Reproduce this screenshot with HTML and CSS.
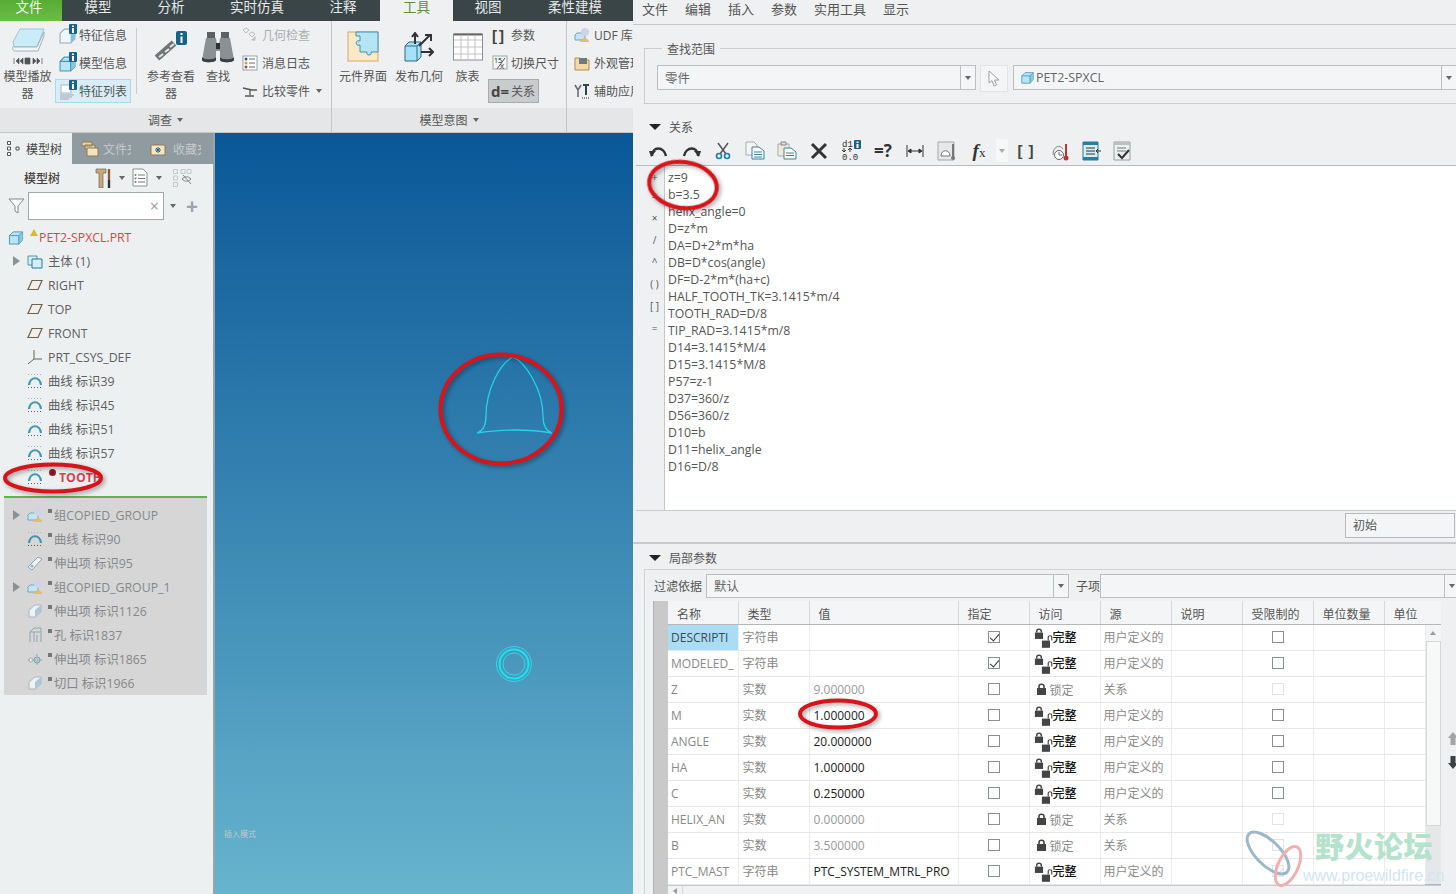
FILE: index.html
```html
<!DOCTYPE html>
<html lang="zh">
<head>
<meta charset="utf-8">
<title>关系</title>
<link rel="stylesheet" href="styles.css">
</head>
<body>
<svg class="defs" xmlns="http://www.w3.org/2000/svg">
  <symbol id="cube" viewBox="0 0 16 16"><path d="M1 6 5 2H15V11L11 15H1Z" fill="#b5e6f8" stroke="#4f93ad"/><path d="M11 6 15 2V11L11 15Z" fill="#7fcbe6"/><path d="M1 6H11V15M11 6 15 2" fill="none" stroke="#4f93ad"/></symbol>
  <symbol id="cubew" viewBox="0 0 16 16"><path d="M1 6 5 2H15V11L11 15H1Z" fill="#eef7fa" stroke="#9ab"/><path d="M11 6V15L15 11V2Z" fill="#7cc4de"/></symbol>
  <symbol id="badge" viewBox="0 0 8 10"><rect width="8" height="10" rx="1" fill="#17648a"/><path d="M3 1.500h2V3H3ZM3 4h2v5H3Z" fill="#fff"/></symbol>
  <symbol id="plane" viewBox="0 0 16 12"><path d="M5 1.500H15L11 10.500H1Z" fill="#f1efe9" stroke="#6d6152" stroke-width="1.200"/></symbol>
  <symbol id="curve" viewBox="0 0 16 16"><path d="M2 12C3 3 13 3 14 12" fill="none" stroke="#3f97ad" stroke-width="2.200"/><path d="M1 14.500H15" stroke="#56676e" stroke-dasharray="1 2"/><path d="M1 1.500H15" stroke="#aab7bc" stroke-dasharray="1 2"/></symbol>
  <symbol id="group" viewBox="0 0 16 16"><path d="M1 8 3 6H11V13H1Z" fill="#c3e6f3" stroke="#6fa7bd"/><circle cx="11" cy="5" r="4" fill="#cfd3e8"/><path d="M6 15C6 10 15 10 15 15Z" fill="#e0bd6f"/></symbol>
  <symbol id="lock" viewBox="0 0 11 12"><path d="M3 5V3.500C3 .5 8 .5 8 3.500V5" fill="none" stroke="#444" stroke-width="1.600"/><rect x="1" y="5" width="9" height="7" fill="#444"/></symbol>
  <symbol id="lockopen" viewBox="0 0 20 16"><rect x="1" y="7" width="9" height="8" fill="#444"/><path d="M8 7V3.500C8 1 12 1 12 3.500V7" fill="none" stroke="#444" stroke-width="1.300"/></symbol>
  <symbol id="solid" viewBox="0 0 16 16"><path d="M2 7 8 2 14 2V9L8 14H2Z" fill="#eef2f3" stroke="#aab6ba"/><path d="M8 7 14 2V9L8 14Z" fill="#a9c9d6"/></symbol>
</svg>

<div class="page">
  <div class="app">
    <nav class="tabs">
      <span class="tab t-file">文件</span>
      <span class="tab t-a">模型</span>
      <span class="tab t-b">分析</span>
      <span class="tab t-c">实时仿真</span>
      <span class="tab t-b">注释</span>
      <span class="tab t-tool">工具</span>
      <span class="tab t-d">视图</span>
      <span class="tab t-e">柔性建模</span>
    </nav>

    <div class="ribbon">
      <section class="group g1">
        <div class="group-body">
          <div class="big w-play">
            <span class="big-icon"><svg width="36" height="38" viewBox="0 0 36 38"><path d="M3 14 10 1H34L27 19H4Z" fill="#c9ecf8" stroke="#9fc5d3"/><path d="M4 19H27L34 4V8L28 23H5C2 23 2 17 4 19Z" fill="#f3f6f7" stroke="#9fb0b8"/><path d="M4 30v6M6 33l3-3v6ZM10 33l3-3v6ZM15 30h5v6h-5ZM23 30l3 3-3 3ZM27 30l3 3-3 3ZM32 30v6" fill="#555" stroke="#555" stroke-width=".7"/></svg></span>
            <span class="big-label">模型播放器</span>
          </div>
          <div class="small-col w-info">
            <div class="small"><span class="si"><svg width="17" height="17"><use href="#cubew"/></svg><svg class="si-b" width="8" height="10"><use href="#badge"/></svg></span><span>特征信息</span></div>
            <div class="small"><span class="si"><svg width="17" height="17"><use href="#cube"/></svg><svg class="si-b" width="8" height="10"><use href="#badge"/></svg></span><span>模型信息</span></div>
            <div class="small on"><span class="si"><svg width="17" height="17" viewBox="0 0 17 17"><rect x="2" y="2" width="10" height="8" fill="#fff" stroke="#a9b5ba"/><path d="M1 12H15M1 14H13M1 16H10" stroke="#a3a9ac"/></svg><svg class="si-b" width="8" height="10"><use href="#badge"/></svg></span><span>特征列表</span></div>
          </div>
          <span class="vsep"></span>
          <div class="big w-ref">
            <span class="big-icon"><svg width="34" height="34" viewBox="0 0 34 34"><path d="M3 28 20 13" stroke="#6e7478" stroke-width="7"/><path d="M5 27l4-3M11 22l4-3M16 17l4-3" stroke="#e8e8e8" stroke-width="2"/><rect x="22" y="1" width="11" height="14" rx="2" fill="#17648a"/><path d="M26.500 3h2v2h-2ZM26.500 6.500h2V13h-2Z" fill="#fff"/></svg></span>
            <span class="big-label">参考查看器</span>
          </div>
          <div class="big w-find">
            <span class="big-icon"><svg width="34" height="32" viewBox="0 0 34 32"><path d="M6 1h8v6H6ZM20 1h8v6h-8Z" fill="#5c6164"/><path d="M5 7h10l1 7h2l1-7h10l4 22c0 3-13 3-14 0v-9h-4v9C15 32 1 32 1 29Z" fill="#8b9193"/><path d="M1 26c1 3 13 3 14 0v3c-1 3-14 3-14 0ZM19 26c1 3 13 3 14 0v3c-1 3-14 3-14 0Z" fill="#3b3f41"/><path d="M15 12h4v6h-4Z" fill="#2e3133"/></svg></span>
            <span class="big-label">查找</span>
          </div>
          <div class="small-col w-tools">
            <div class="small dim"><span class="si"><svg width="16" height="16" viewBox="0 0 16 16"><path d="M1 3 4 1 7 3 4 6ZM7 7l3-2 3 2-3 3Z" fill="none" stroke="#b9bfc2"/><path d="M9 13l5-4-1 5Z" fill="#b9bfc2"/></svg></span><span>几何检查</span></div>
            <div class="small"><span class="si"><svg width="16" height="16" viewBox="0 0 16 16"><rect x="1" y="1" width="14" height="14" fill="#fff" stroke="#9aa3a7"/><path d="M7 4h6M7 8h6M7 12h6" stroke="#666"/><circle cx="4" cy="4" r="1.500" fill="#17648a"/><circle cx="4" cy="8" r="1.500" fill="#d99b2a"/><circle cx="4" cy="12" r="1.500" fill="#b04a3a"/></svg></span><span>消息日志</span></div>
            <div class="small"><span class="si"><svg width="16" height="16" viewBox="0 0 16 16"><path d="M1 5 10 7H15M8 7V12M3 13H12" fill="none" stroke="#555" stroke-width="1.300"/></svg></span><span>比较零件</span><i class="caret c-cmp"></i></div>
          </div>
        </div>
        <div class="group-label">调查<i class="caret"></i></div>
      </section>

      <section class="group g2">
        <div class="group-body">
          <div class="big w-m1">
            <span class="big-icon"><svg width="32" height="32" viewBox="0 0 32 32"><rect x="1" y="1" width="30" height="29" fill="#fbe9c6" stroke="#d7a869"/><path d="M9 1H31V21H24C26 25 18 25 20 21H13V14C8 16 8 8 13 10V5H9Z" fill="#b5e4f5" stroke="#3e92b2"/></svg></span>
            <span class="big-label">元件界面</span>
          </div>
          <div class="big w-m1">
            <span class="big-icon"><svg width="30" height="30" viewBox="0 0 30 30"><path d="M1 14 5 10H17V25L13 29H1Z" fill="#a6e1f7" stroke="#2f6a80"/><path d="M1 14H13V29M13 14 17 10" fill="none" stroke="#2f6a80"/><path d="M11 12V2M8 5l3-4 3 4M15 14 26 3M21 3h6v6M17 20H29M25 16l4 4-4 4" fill="none" stroke="#333" stroke-width="2"/></svg></span>
            <span class="big-label">发布几何</span>
          </div>
          <div class="big w-m2">
            <span class="big-icon"><svg width="30" height="28" viewBox="0 0 30 28"><rect x=".5" y="1" width="29" height="26" fill="#fff" stroke="#8d8d8d"/><path d="M1 1.500H29" stroke="#666" stroke-width="2"/><path d="M1 7H29M1 14H29M1 21H29M8 2V27M15 2V27M22 2V27" stroke="#c3c3c3"/></svg></span>
            <span class="big-label">族表</span>
          </div>
          <div class="small-col w-m3">
            <div class="small"><span class="si-w bracket">[ ]</span><span>参数</span></div>
            <div class="small"><span class="si-w"><svg width="16" height="16" viewBox="0 0 16 16"><rect x="1" y="1" width="14" height="13" fill="#f4f4f4" stroke="#9aa"/><text class="svg-t" x="2" y="8">15</text><path d="M5 14 13 3" stroke="#555"/><text class="svg-t" x="8" y="14">X</text></svg></span><span>切换尺寸</span></div>
            <div class="small act"><span class="si-w dq">d=</span><span>关系</span></div>
          </div>
        </div>
        <div class="group-label">模型意图<i class="caret"></i></div>
      </section>

      <section class="group g3">
        <div class="group-body">
          <div class="small-col w-m4">
            <div class="small"><span class="si"><svg width="16" height="16"><use href="#group"/></svg></span><span>UDF 库</span></div>
            <div class="small"><span class="si"><svg width="16" height="16" viewBox="0 0 16 16"><path d="M1 3H6L8 5H15V15H1Z" fill="#f1d9a8" stroke="#b08b52"/><rect x="5" y="3" width="8" height="6" fill="#6f7a7f"/></svg></span><span>外观管理</span></div>
            <div class="small"><span class="si"><svg width="16" height="16" viewBox="0 0 16 16"><path d="M1 2 4 7V14M7 2 4 7" fill="none" stroke="#667" stroke-width="1.500"/><path d="M9 2H15M12 2V12" stroke="#345" stroke-width="2"/><path d="M8 15H15" stroke="#333" stroke-dasharray="1 1"/></svg></span><span>辅助应用</span></div>
          </div>
        </div>
        <div class="group-label"></div>
      </section>
    </div>

    <div class="work">
      <aside class="side">
        <div class="side-tabs">
          <span class="stab on"><svg width="15" height="17" viewBox="0 0 15 17"><path d="M1.500 1.500h3v3h-3ZM1.500 7h3v3h-3ZM1.500 12.500h3v3h-3ZM10 7h3v3h-3Z" fill="#fff" stroke="#555"/></svg>模型树</span>
          <span class="stab"><svg width="18" height="16" viewBox="0 0 18 16"><path d="M1 1H11V5H1ZM4 4H14V8H4Z" fill="#e9d3a6" stroke="#8d7a55"/><path d="M6 7H17V15H6Z" fill="#f3e4bf" stroke="#8d7a55"/></svg><span class="clip-a">文件夹</span></span>
          <span class="stab s3"><svg width="16" height="14" viewBox="0 0 16 14"><path d="M1 3H15V13H1Z" fill="#f5e6c2" stroke="#8d7a55"/><path d="M8 5v6M5 8h6M6 6l4 4M10 6l-4 4" stroke="#17648a"/></svg><span class="clip-a">收藏夹</span></span>
        </div>
        <div class="side-tool">
          <span class="st-title">模型树</span>
          <svg class="st-a" width="17" height="20" viewBox="0 0 17 20"><path d="M1 1h10v4H8v15H4V5H1Z" fill="#c9a875" stroke="#555" stroke-width=".6"/><path d="M14 1V12" stroke="#8a5b2f" stroke-width="2.400"/><path d="M14 12v8" stroke="#333" stroke-width="2.400"/></svg>
          <i class="caret c-a"></i>
          <svg class="st-b" width="16" height="19" viewBox="0 0 16 19"><path d="M1 1H11L15 5V18H1Z" fill="#fff" stroke="#8a8f92"/><path d="M6 7H13M6 10.500H13M6 14H13" stroke="#777"/><circle cx="3.500" cy="7" r="1" fill="#777"/><circle cx="3.500" cy="10.500" r="1" fill="#777"/><circle cx="3.500" cy="14" r="1" fill="#777"/></svg>
          <i class="caret c-b"></i>
          <svg class="st-c" width="21" height="20" viewBox="0 0 21 20"><path d="M1.500 1.500h4v4h-4ZM1.500 8h4v4h-4ZM1.500 14.500h4v4h-4ZM9 1.500h4v4H9ZM15 1.500h4v4h-4Z" fill="none" stroke="#c2c7ca"/><path d="M10 11c3-3 6-3 9 0-3 3-6 3-9 0ZM11 7l8 9" fill="none" stroke="#7d8386"/></svg>
        </div>
        <div class="side-search">
          <svg width="17" height="16" viewBox="0 0 17 16"><path d="M1 1H16L10 8V15L7 13V8Z" fill="#fff" stroke="#80878a"/></svg>
          <span class="s-input"><span class="s-x">×</span></span>
          <i class="caret c-s"></i>
          <span class="s-plus">+</span>
        </div>

        <ul class="tree">
          <li class="row root"><svg width="15" height="15"><use href="#cube"/></svg><svg class="warn" width="8" height="8" viewBox="0 0 8 8"><path d="M4 0 8 7H0Z" fill="#e4b429"/></svg><span>PET2-SPXCL.PRT</span></li>
          <li class="row exp"><svg width="16" height="16" viewBox="0 0 16 16"><path d="M1 3H10V12H1Z" fill="#d2eefa" stroke="#4a97b6"/><path d="M5 6H15V15H5Z" fill="#d2eefa" stroke="#2f7696"/></svg><span>主体 (1)</span></li>
          <li class="row"><svg width="16" height="12"><use href="#plane"/></svg><span>RIGHT</span></li>
          <li class="row"><svg width="16" height="12"><use href="#plane"/></svg><span>TOP</span></li>
          <li class="row"><svg width="16" height="12"><use href="#plane"/></svg><span>FRONT</span></li>
          <li class="row"><svg width="16" height="16" viewBox="0 0 16 16"><path d="M7 1V10L1 15M7 10H15" fill="none" stroke="#6d6152"/></svg><span>PRT_CSYS_DEF</span></li>
          <li class="row"><svg width="16" height="16"><use href="#curve"/></svg><span>曲线 标识39</span></li>
          <li class="row"><svg width="16" height="16"><use href="#curve"/></svg><span>曲线 标识45</span></li>
          <li class="row"><svg width="16" height="16"><use href="#curve"/></svg><span>曲线 标识51</span></li>
          <li class="row"><svg width="16" height="16"><use href="#curve"/></svg><span>曲线 标识57</span></li>
          <li class="row fail"><svg width="16" height="16"><use href="#curve"/></svg><i class="err"></i><span>TOOTH</span></li>
        </ul>
        <div class="insert-line"></div>
        <ul class="tree off">
          <li class="row exp"><svg width="16" height="16"><use href="#group"/></svg><i class="mk"></i><span>组COPIED_GROUP</span></li>
          <li class="row"><svg width="16" height="16"><use href="#curve"/></svg><i class="mk"></i><span>曲线 标识90</span></li>
          <li class="row"><svg width="16" height="16" viewBox="0 0 16 16"><path d="M1 12 11 2 15 4 5 15Z" fill="#eef2f3" stroke="#8fa7b2"/><circle cx="5" cy="11" r="1.500" fill="#8fb7c8"/></svg><i class="mk"></i><span>伸出项 标识95</span></li>
          <li class="row exp"><svg width="16" height="16"><use href="#group"/></svg><i class="mk"></i><span>组COPIED_GROUP_1</span></li>
          <li class="row"><svg width="16" height="16"><use href="#solid"/></svg><i class="mk"></i><span>伸出项 标识1126</span></li>
          <li class="row"><svg width="16" height="16" viewBox="0 0 16 16"><path d="M3 15V5L7 1H14V15M7 15V5L3 5M7 5H14M10 15V8" fill="none" stroke="#8fa7b2"/></svg><i class="mk"></i><span>孔 标识1837</span></li>
          <li class="row"><svg width="16" height="16" viewBox="0 0 16 16"><circle cx="10" cy="9" r="3" fill="none" stroke="#6e9fb4"/><circle cx="4" cy="9" r="2" fill="#fff" stroke="#aab"/><path d="M10 3V15M1 9H15" stroke="#8fa7b2" stroke-dasharray="2 1"/></svg><i class="mk"></i><span>伸出项 标识1865</span></li>
          <li class="row"><svg width="16" height="16"><use href="#solid"/></svg><i class="mk"></i><span>切口 标识1966</span></li>
        </ul>
      </aside>
      <main class="view"><span class="mode">插入模式</span></main>
    </div>
  </div>

  <div class="dialog">
    <nav class="menu">
      <span>文件</span><span>编辑</span><span>插入</span><span>参数</span><span>实用工具</span><span>显示</span>
    </nav>

    <fieldset class="scope">
      <legend>查找范围</legend>
      <div class="scope-row">
        <div class="sel s-part"><span class="sel-t">零件</span><span class="sel-c"><i class="caret"></i></span></div>
        <span class="pick"><svg width="12" height="17" viewBox="0 0 12 17"><path d="M1 1V13L4 10.500 6 16 8.500 15 6.500 10H11Z" fill="#fff" stroke="#9a9fa2"/></svg></span>
        <div class="sel s-obj"><span class="sel-t"><svg width="13" height="13"><use href="#cube"/></svg>PET2-SPXCL</span><span class="sel-c"><i class="caret"></i></span></div>
      </div>
    </fieldset>

    <div class="sec-head rel-head"><i class="tri"></i>关系</div>
    <div class="rtools">
      <svg class="rt" width="20" height="16" viewBox="0 0 20 16"><path d="M3 13C3 3 15 3 17 13" fill="none" stroke="#333" stroke-width="2.400"/><path d="M0 8 7 8 2 14Z" fill="#333"/></svg>
      <svg class="rt" width="20" height="16" viewBox="0 0 20 16"><path d="M3 13C5 3 17 3 17 13" fill="none" stroke="#333" stroke-width="2.400"/><path d="M20 8 13 8 18 14Z" fill="#333"/></svg>
      <svg class="rt" width="16" height="18" viewBox="0 0 16 18"><path d="M3 1 11 12M13 1 5 12" stroke="#555" stroke-width="1.500"/><circle cx="4" cy="14" r="2.500" fill="none" stroke="#1e7ea1" stroke-width="1.600"/><circle cx="12" cy="14" r="2.500" fill="none" stroke="#1e7ea1" stroke-width="1.600"/></svg>
      <svg class="rt" width="20" height="19" viewBox="0 0 20 19"><path d="M1 1H9L12 4V14H1Z" fill="#f5f5f5" stroke="#a8adb0"/><path d="M7 6H14L19 10V18H7Z" fill="#fff" stroke="#3e7f99"/><path d="M9 11H17M9 13.500H17M9 16H17" stroke="#3e7f99"/></svg>
      <svg class="rt" width="20" height="19" viewBox="0 0 20 19"><path d="M1 3H12V15H1Z" fill="#f1e9da" stroke="#a8adb0"/><path d="M4 1H9V4H4Z" fill="#ddd" stroke="#888"/><path d="M7 7H14L19 11V18H7Z" fill="#fff" stroke="#3e7f99"/><path d="M9 12H17M9 14.500H17" stroke="#3e7f99"/></svg>
      <svg class="rt" width="18" height="18" viewBox="0 0 18 18"><path d="M2 2 16 16M16 2 2 16" stroke="#333" stroke-width="3"/></svg>
      <svg class="rt" width="20" height="21" viewBox="0 0 20 21"><text class="svg-m" x="1" y="7">d1</text><rect x="13" y="0" width="7" height="9" rx="1" fill="#17648a"/><path d="M15.500 1.500h2V3h-2ZM15.500 4h2v4h-2Z" fill="#fff"/><path d="M3 8v4M1 10l2 2 2-2M9 12V8M7 10l2-2 2 2" fill="none" stroke="#333"/><text class="svg-m" x="1" y="20">0.0</text></svg>
      <span class="eq">=?</span>
      <svg class="rt" width="18" height="14" viewBox="0 0 18 14"><path d="M1 1V13M17 1V13M2 7H16M2 7l3-2v4ZM16 7l-3-2v4Z" stroke="#333" fill="#333"/></svg>
      <svg class="rt" width="20" height="20" viewBox="0 0 20 20"><path d="M1 19V1H17V19Z" fill="#e6e8e9" stroke="#a3a8ab"/><path d="M4 15C4 8 13 8 13 15Z" fill="#fff" stroke="#777"/><path d="M16 3V16" stroke="#777" stroke-width="2"/><circle cx="16" cy="17" r="2" fill="#777"/></svg>
      <span class="fx"><span class="fx-f">f</span>x</span>
      <span class="fx-c"><i class="caret"></i></span>
      <span class="brk">[ ]</span>
      <svg class="rt" width="20" height="20" viewBox="0 0 20 20"><path d="M3 14C3 5 10 3 13 8" fill="#eee" stroke="#888"/><circle cx="9" cy="14" r="4.500" fill="#fff" stroke="#666"/><path d="M9 11V14H12" fill="none" stroke="#666"/><path d="M16 3V15" stroke="#b33" stroke-width="2"/><circle cx="16" cy="17" r="2.500" fill="#b33"/></svg>
      <svg class="rt" width="20" height="20" viewBox="0 0 20 20"><path d="M1 1H16V19H1Z" fill="#d7ecf4" stroke="#2b7c9d"/><path d="M1 1H16V4H1ZM1 16H16V19H1Z" fill="#2b7c9d"/><path d="M4 7H13M4 10H13M4 13H13" stroke="#333"/><path d="M19 10 14 10M16 8l-2 2 2 2" fill="none" stroke="#333"/></svg>
      <svg class="rt" width="18" height="20" viewBox="0 0 18 20"><path d="M1 1H17V19H1Z" fill="#eceeef" stroke="#98a0a4"/><path d="M1 1H17V4H1Z" fill="#b9c0c3"/><path d="M4 7H13M4 10H13" stroke="#777"/><path d="M5 13 9 17 16 9" fill="none" stroke="#333" stroke-width="2"/></svg>
    </div>

    <div class="editor">
      <div class="gutter">
        <span class="t">+</span><span class="t">−</span><span>×</span><span>/</span><span>^</span><span>( )</span><span>[ ]</span><span>=</span>
      </div>
      <pre class="code">z=9
b=3.5
helix_angle=0
D=z*m
DA=D+2*m*ha
DB=D*cos(angle)
DF=D-2*m*(ha+c)
HALF_TOOTH_TK=3.1415*m/4
TOOTH_RAD=D/8
TIP_RAD=3.1415*m/8
D14=3.1415*M/4
D15=3.1415*M/8
P57=z-1
D37=360/z
D56=360/z
D10=b
D11=helix_angle
D16=D/8</pre>
    </div>
    <div class="init-row"><span class="init">初始</span></div>
    <div class="thick"></div>

    <div class="sec-head par-head"><i class="tri"></i>局部参数</div>
    <div class="panel">
      <div class="filter">
        <span class="f-label">过滤依据</span>
        <div class="sel s-filter"><span class="sel-t">默认</span><span class="sel-c"><i class="caret"></i></span></div>
        <span class="f-sub">子项</span>
        <div class="sel s-child"><span class="sel-t"></span><span class="sel-c"><i class="caret"></i></span></div>
      </div>
      <div class="tbl-wrap">
        <div class="rowhead"></div>
        <div class="tbl-col">
          <table class="params">
            <colgroup><col class="c1"><col class="c2"><col class="c3"><col class="c2"><col class="c2"><col class="c2"><col class="c2"><col class="c2"><col class="c2"><col class="c4"><col class="c5"></colgroup>
            <thead><tr><th>名称</th><th>类型</th><th>值</th><th>指定</th><th>访问</th><th>源</th><th>说明</th><th>受限制的</th><th>单位数量</th><th colspan="2">单位</th></tr></thead>
            <tbody>
              <tr><td class="nm sel-nm"><span>DESCRIPTI</span></td><td class="ty">字符串</td><td></td><td class="ck"><i class="box yes"></i></td><td class="ac"><span class="locks"><svg class="l1" width="10" height="11"><use href="#lock"/></svg><svg class="l2" width="18" height="15" viewBox="0 0 20 16"><use href="#lockopen"/></svg></span><span class="full">完整</span></td><td class="src">用户定义的</td><td></td><td class="ck"><i class="box"></i></td><td></td><td></td>
                <td class="sb" rowspan="10"><div class="sb-in"><span class="sb-up"><i class="caret up"></i></span><span class="sb-thumb"></span><span class="sb-rest"></span></div></td></tr>
              <tr><td class="nm"><span>MODELED_</span></td><td class="ty">字符串</td><td></td><td class="ck"><i class="box yes"></i></td><td class="ac"><span class="locks"><svg class="l1" width="10" height="11"><use href="#lock"/></svg><svg class="l2" width="18" height="15" viewBox="0 0 20 16"><use href="#lockopen"/></svg></span><span class="full">完整</span></td><td class="src">用户定义的</td><td></td><td class="ck"><i class="box"></i></td><td></td><td></td></tr>
              <tr><td class="nm"><span>Z</span></td><td class="ty">实数</td><td class="v g">9.000000</td><td class="ck"><i class="box"></i></td><td class="ac"><svg class="l0" width="11" height="12"><use href="#lock"/></svg><span class="lk">锁定</span></td><td class="src">关系</td><td></td><td class="ck"><i class="box dis"></i></td><td></td><td></td></tr>
              <tr><td class="nm"><span>M</span></td><td class="ty">实数</td><td class="v">1.000000</td><td class="ck"><i class="box"></i></td><td class="ac"><span class="locks"><svg class="l1" width="10" height="11"><use href="#lock"/></svg><svg class="l2" width="18" height="15" viewBox="0 0 20 16"><use href="#lockopen"/></svg></span><span class="full">完整</span></td><td class="src">用户定义的</td><td></td><td class="ck"><i class="box"></i></td><td></td><td></td></tr>
              <tr><td class="nm"><span>ANGLE</span></td><td class="ty">实数</td><td class="v">20.000000</td><td class="ck"><i class="box"></i></td><td class="ac"><span class="locks"><svg class="l1" width="10" height="11"><use href="#lock"/></svg><svg class="l2" width="18" height="15" viewBox="0 0 20 16"><use href="#lockopen"/></svg></span><span class="full">完整</span></td><td class="src">用户定义的</td><td></td><td class="ck"><i class="box"></i></td><td></td><td></td></tr>
              <tr><td class="nm"><span>HA</span></td><td class="ty">实数</td><td class="v">1.000000</td><td class="ck"><i class="box"></i></td><td class="ac"><span class="locks"><svg class="l1" width="10" height="11"><use href="#lock"/></svg><svg class="l2" width="18" height="15" viewBox="0 0 20 16"><use href="#lockopen"/></svg></span><span class="full">完整</span></td><td class="src">用户定义的</td><td></td><td class="ck"><i class="box"></i></td><td></td><td></td></tr>
              <tr><td class="nm"><span>C</span></td><td class="ty">实数</td><td class="v">0.250000</td><td class="ck"><i class="box"></i></td><td class="ac"><span class="locks"><svg class="l1" width="10" height="11"><use href="#lock"/></svg><svg class="l2" width="18" height="15" viewBox="0 0 20 16"><use href="#lockopen"/></svg></span><span class="full">完整</span></td><td class="src">用户定义的</td><td></td><td class="ck"><i class="box"></i></td><td></td><td></td></tr>
              <tr><td class="nm"><span>HELIX_AN</span></td><td class="ty">实数</td><td class="v g">0.000000</td><td class="ck"><i class="box"></i></td><td class="ac"><svg class="l0" width="11" height="12"><use href="#lock"/></svg><span class="lk">锁定</span></td><td class="src">关系</td><td></td><td class="ck"><i class="box dis"></i></td><td></td><td></td></tr>
              <tr><td class="nm"><span>B</span></td><td class="ty">实数</td><td class="v g">3.500000</td><td class="ck"><i class="box"></i></td><td class="ac"><svg class="l0" width="11" height="12"><use href="#lock"/></svg><span class="lk">锁定</span></td><td class="src">关系</td><td></td><td class="ck"><i class="box dis"></i></td><td></td><td></td></tr>
              <tr><td class="nm"><span>PTC_MAST</span></td><td class="ty">字符串</td><td class="v"><span class="clip-v">PTC_SYSTEM_MTRL_PRO</span></td><td class="ck"><i class="box"></i></td><td class="ac"><span class="locks"><svg class="l1" width="10" height="11"><use href="#lock"/></svg><svg class="l2" width="18" height="15" viewBox="0 0 20 16"><use href="#lockopen"/></svg></span><span class="full">完整</span></td><td class="src">用户定义的</td><td></td><td class="ck"><i class="box yes dis"></i></td><td></td><td></td></tr>
            </tbody>
          </table>
          <div class="hscroll"><span class="hs-l"><i class="caret left"></i></span></div>
        </div>
        <div class="updown">
          <svg width="10" height="13" viewBox="0 0 10 13"><path d="M5 0 10 6H7.500V13H2.500V6H0Z" fill="#a0a4a6"/></svg>
          <svg width="10" height="13" viewBox="0 0 10 13"><path d="M5 13 10 7H7.500V0H2.500V7H0Z" fill="#3d4144"/></svg>
        </div>
      </div>
    </div>
  </div>

  <svg class="marks" width="1456" height="894" viewBox="0 0 1456 894">
    <path d="M477 433C483 431 486 425 486 416C486 390 500 363 513 357C526 363 543 390 543 416C543 425 546 431 552 433M477 433C500 429 530 429 552 433" fill="none" stroke="#25d3e6" stroke-width="1.300"/>
    <circle cx="514" cy="664" r="17.500" fill="none" stroke="#2de6ee" stroke-width=".8"/>
    <circle cx="514" cy="664" r="14.500" fill="none" stroke="#19e3ee" stroke-width="2"/>
    <circle cx="514" cy="664" r="11" fill="none" stroke="#2de6ee" stroke-width=".8"/>
    <g class="ring">
      <ellipse cx="683" cy="185" rx="34" ry="23" transform="rotate(8 683 185)"/>
      <ellipse cx="501" cy="409" rx="60.500" ry="54.500"/>
      <ellipse cx="53" cy="478" rx="48" ry="13.500"/>
      <ellipse cx="838" cy="714" rx="38" ry="13.500"/>
    </g>
    <g class="wm-logo" fill="none">
      <ellipse cx="1268" cy="853" rx="27" ry="12" transform="rotate(45 1268 853)" stroke="#9bb8c8" stroke-width="3"/>
      <ellipse cx="1288" cy="866" rx="21" ry="10" transform="rotate(-65 1288 866)" stroke="#f0b0b0" stroke-width="3"/>
    </g>
  </svg>
  <div class="wm"><span class="wm-cn">野火论坛</span><span class="wm-en">www.proewildfire.cn</span></div>
</div>
</body>
</html>
```

FILE: styles.css
```css
* { box-sizing: border-box; }
html, body { margin: 0; padding: 0; }
body {
  width: 1456px;
  height: 894px;
  overflow: hidden;
  font-family: "Open Sans", "Noto Sans CJK SC", sans-serif;
  font-size: 12px;
  color: #555;
  background: #eef0f2;
}
.defs { display: none; }
ul { list-style: none; margin: 0; padding: 0; }
i { display: inline-block; font-style: normal; }

.page { position: relative; display: flex; width: 1456px; height: 894px; overflow: hidden; }
.app { width: 633px; height: 894px; display: flex; flex-direction: column; flex: none; }

.caret {
  width: 0; height: 0;
  margin-left: 5px;
  border-left: 3.5px solid transparent;
  border-right: 3.5px solid transparent;
  border-top: 4px solid #666;
}
.caret.up { border-top: 0; border-bottom: 4px solid #999; margin: 0; }
.caret.left { border-left: 0; border-top: 3.5px solid transparent; border-bottom: 3.5px solid transparent; border-right: 4px solid #999; margin: 0; }

/* top tabs */
.tabs { display: flex; height: 21px; flex: none; background: #3a4547; overflow: hidden; }
.tab { display: block; text-align: center; font-size: 13.5px; line-height: 15px; color: #e6eaeb; }
.t-file { width: 62px; padding-right: 4px; background: linear-gradient(#56ad33, #6cbc47); color: #f2f7ec; }
.t-a { width: 72px; }
.t-b { width: 74px; }
.t-c { width: 98px; }
.t-tool { width: 73px; background: #eef0f1; color: #5d9140; }
.t-d { width: 70px; }
.t-e { width: 104px; }

/* ribbon */
.ribbon { display: flex; height: 112px; flex: none; background: #eef0f1; border-bottom: 1px solid #c5c9cb; }
.group { display: flex; flex-direction: column; border-right: 1px solid #c3c7c9; }
.g1 { width: 332px; }
.g2 { width: 235px; }
.g3 { flex: 1; border-right: 0; overflow: hidden; }
.group-body { display: flex; height: 87px; flex: none; }
.group-label { height: 24px; display: flex; align-items: center; justify-content: center; background: #e4e6e7; color: #555; }
.g2 .group-body { padding-left: 3px; }
.big { display: flex; flex-direction: column; align-items: center; flex: none; }
.big-icon { height: 47px; display: flex; align-items: center; justify-content: center; padding-top: 4px; }
.big-label { max-width: 50px; line-height: 17px; text-align: center; color: #555; }
.w-play { width: 55px; }
.w-ref { width: 60px; }
.w-find { width: 34px; }
.w-m1 { width: 56px; }
.w-m2 { width: 41px; }
.small-col { display: flex; flex-direction: column; flex: none; }
.w-info { width: 76px; }
.w-tools { width: 96px; padding-left: 7px; }
.w-m3 { width: 78px; }
.w-m4 { padding-left: 7px; white-space: nowrap; }
.vsep { width: 1px; height: 66px; margin: 7px 4px 0 5px; background: #c8cccd; flex: none; }
.small { display: flex; align-items: center; height: 28px; white-space: nowrap; color: #555; }
.small .si { position: relative; width: 16px; height: 17px; margin-right: 4px; flex: none; }
.w-info .small .si { margin-left: 4px; }
.si-b { position: absolute; right: -2px; top: -3px; }
.small.dim { color: #a9aeb1; }
.c-cmp { margin-left: 6px; }
.small.on, .small.act { height: 24px; margin: 2px 0; }
.small.on { background: #d7eef8; border: 1px solid #a9daec; width: 76px; }
.small.on .si { margin-left: 3px; }
.si-w { width: 22px; margin-left: 1px; flex: none; display: flex; align-items: center; justify-content: center; }
.bracket { font-family: "Liberation Sans", sans-serif; font-size: 15px; font-weight: 700; color: #444; padding-right: 5px; white-space: nowrap; letter-spacing: -1px; }
.dq { font-size: 15px; font-weight: 700; color: #444; line-height: 1; }
.small.act { width: 51px; background: #c9cccd; border: 1px solid #a7abad; }
.small.act .si-w { margin-left: 0; }
.svg-t { font-size: 7px; fill: #222; }
.svg-m { font-size: 9px; fill: #333; font-family: "Liberation Mono", monospace; }

/* side + view */
.work { display: flex; flex: 1; min-height: 0; }
.side { width: 215px; flex: none; background: #edf0f1; border-right: 2px solid #9aa3a7; overflow: hidden; }
.side-tabs { display: flex; height: 31px; background: #909b9f; }
.stab { display: flex; align-items: center; gap: 4px; width: 70px; padding-left: 9px; color: #cbd1d3; white-space: nowrap; overflow: hidden; }
.stab.on { width: 72px; padding-left: 6px; gap: 5px; background: #edf0f1; color: #444; }
.stab.s3 { padding-left: 8px; gap: 7px; }
.clip-a { width: 28px; overflow: hidden; opacity: .9; }
.side-tool { display: flex; align-items: center; height: 27px; padding-left: 24px; }
.st-title { width: 71px; color: #444; font-weight: 500; }
.c-a { margin-left: 7px; }
.st-b { margin-left: 7px; }
.c-b { margin-left: 8px; }
.st-c { margin-left: 10px; }
.side-search { display: flex; align-items: center; height: 30px; padding-left: 8px; }
.s-input { width: 136px; height: 28px; margin-left: 3px; display: flex; align-items: center; justify-content: flex-end; padding-right: 4px; background: #fff; border: 1px solid #a3a8ab; }
.s-x { font-size: 16px; color: #9aa0a3; }
.c-s { margin-left: 6px; }
.s-plus { margin-left: 10px; font-size: 21px; font-weight: 700; line-height: 20px; color: #9ea4a7; }
.tree { padding-top: 4px; }
.row { position: relative; display: flex; align-items: center; height: 24px; padding-left: 27px; font-size: 12.3px; white-space: nowrap; color: #5d6062; }
.row > svg:first-child { width: 16px; margin-right: 5px; flex: none; }
.row.exp::before { content: ""; position: absolute; left: 13px; top: 7px; border-left: 7px solid #8b9194; border-top: 5px solid transparent; border-bottom: 5px solid transparent; }
.row.root { padding-left: 8px; color: #d8464b; }
.row.root > svg:first-child { margin-right: 6px; }
.warn { margin: -8px 1px 0 0; flex: none; }
.fail { color: #d84155; font-weight: 700; }
.err { width: 7px; height: 7px; border-radius: 50%; border: 2px solid #a6161f; background: #333; margin: -9px 3px 0 1px; flex: none; }
.insert-line { height: 2px; margin: 7px 6px 0 4px; background: #5cb745; }
.tree.off { margin: 0 6px 0 4px; padding-top: 5px; height: 197px; background: #d6d6d6; }
.tree.off .row { padding-left: 23px; color: #85888a; }
.tree.off .row.exp::before { left: 9px; }
.mk { width: 4px; height: 4px; margin: -8px 2px 0 0; background: #777; flex: none; }
.view { position: relative; flex: 1; background: linear-gradient(#0a5798, #67b4ce); }
.mode { position: absolute; left: 9px; top: 695px; font-size: 8px; color: #c5c8c8; }

/* dialog */
.dialog { width: 823px; height: 894px; flex: none; overflow: hidden; background: #eef0f2; }
.menu { display: flex; gap: 17px; height: 25px; padding: 1px 0 0 9px; border-bottom: 1px solid #c4c7c9; font-size: 13px; line-height: 16px; color: #555; }
.scope { display: block; width: 900px; height: 64px; margin: 15px 0 0 11px; padding: 0 0 0 12px; border: 1px solid #c9cccd; min-inline-size: 0; }
.scope legend { margin-left: 5px; padding: 0 5px; height: 17px; line-height: 20px; color: #555; }
.scope-row { display: flex; margin-top: 8px; }
.sel { display: flex; height: 25px; background: #f4f5f6; border: 1px solid #bcbfc1; flex: none; }
.sel-t { flex: 1; display: flex; align-items: center; gap: 2px; padding-left: 7px; color: #666; font-size: 12.4px; }
.sel-c { width: 15px; display: flex; align-items: center; justify-content: center; border-left: 1px solid #bcbfc1; }
.sel-c .caret { margin: 0; }
.s-part { width: 319px; }
.pick { width: 28px; height: 27px; margin: 0 5px 0 4px; display: flex; align-items: center; justify-content: center; background: #f4f5f6; border: 1px solid #e2e4e5; }
.s-obj { width: 444px; }
.sec-head { display: flex; align-items: center; height: 16px; padding-left: 16px; color: #555; }
.tri { width: 0; height: 0; margin-right: 8px; border-left: 6px solid transparent; border-right: 6px solid transparent; border-top: 6px solid #222; }
.rel-head { margin-top: 15px; }
.rtools { display: flex; align-items: center; height: 23px; margin: 4px 0 3px 10px; }
.rt { flex: none; margin: 0 6px; }
.rt:nth-child(3) { margin: 0 8px; }
.rt:nth-child(6) { margin: 0 7px; }
.rt:nth-child(9) { margin: 0 7px; }
.eq { flex: none; width: 20px; margin: 0 6px; text-align: center; font-size: 17px; font-weight: 700; color: #333; }
.fx { flex: none; width: 20px; margin: 0 6px; font-size: 13px; text-align: center; color: #333; font-family: "Liberation Serif", serif; }
.fx-f { font-size: 19px; font-style: italic; font-weight: 700; }
.fx-c { width: 12px; height: 23px; margin-left: 1px; display: flex; align-items: center; justify-content: center; background: #f6f7f7; }
.fx-c .caret { margin: 0; border-top-color: #aaa; }
.brk { flex: none; width: 18px; margin: 0 9px 0 9px; text-align: center; font-size: 15px; font-weight: 700; color: #444; white-space: nowrap; letter-spacing: 1px; font-family: "Liberation Sans", sans-serif; }
.rt:nth-child(16) { margin: 0 6px 0 5px; }
.editor { display: flex; height: 346px; margin-left: 3px; background: #fff; border-top: 1px solid #b8bcbe; border-bottom: 1px solid #c8cbcd; }
.gutter { display: flex; flex-direction: column; width: 29px; flex: none; padding: 1px 0 0 9px; background: #eef0f2; border-right: 1px solid #c4c7c9; font-size: 10px; color: #555; }
.gutter span { height: 22px; line-height: 22px; text-align: center; white-space: nowrap; }
.gutter span.t { height: 20px; line-height: 20px; }
.code { flex: 1; margin: 0; padding: 3px 0 0 3px; font: 12.3px/17px "Open Sans", sans-serif; color: #555; }
.init-row { display: flex; justify-content: flex-end; height: 25px; margin-top: 2px; padding-right: 1px; }
.init { width: 110px; height: 25px; padding-left: 7px; line-height: 23px; background: #f4f5f6; border: 1px solid #b8bbbd; color: #555; }
.thick { height: 2px; margin-top: 4px; background: #c7cacc; }
.par-head { margin-top: 6px; }
.panel { margin: 3px 0 0 11px; height: 330px; border: 1px solid #cfd2d3; border-right: 0; border-bottom: 0; overflow: hidden; }
.filter { display: flex; align-items: center; height: 24px; margin-top: 4px; padding-left: 9px; }
.f-label { width: 52px; flex: none; color: #555; }
.s-filter { width: 363px; height: 24px; }
.f-sub { width: 31px; flex: none; padding-left: 7px; white-space: nowrap; color: #555; }
.s-child { width: 360px; height: 24px; }
.tbl-wrap { display: flex; margin: 3px 0 0 8px; height: 293px; }
.rowhead { width: 15px; flex: none; background: #c9c9c9; border-left: 1px solid #aeb1b2; }
.tbl-col { width: 773px; flex: none; overflow: hidden; }
.params { width: 773px; table-layout: fixed; border-collapse: collapse; background: #fff; }
.c1 { width: 70px; } .c2 { width: 71px; } .c3 { width: 149px; } .c4 { width: 41px; } .c5 { width: 16px; }
.params th { height: 23px; padding: 3px 0 0 9px; font-weight: 400; text-align: left; color: #555; background: #f4f5f6; border-right: 1px solid #d5d7d8; border-bottom: 1px solid #b5b8ba; white-space: nowrap; }
.params td { height: 26px; padding: 0; border-right: 1px solid #ececec; border-bottom: 1px solid #e8e8e8; white-space: nowrap; overflow: hidden; color: #888; }
.nm span { display: block; width: 64px; margin-left: 3px; overflow: hidden; color: #888; }
.sel-nm { background: #abdcf6; }
.sel-nm span { color: #3c4a52; }
.params .ty { padding-left: 4px; }
.params .v { padding-left: 4px; color: #222; }
.params .v.g { color: #999; }
.clip-v { display: block; width: 142px; overflow: hidden; }
.ck { text-align: center; line-height: 0; }
.box { position: relative; width: 12px; height: 12px; background: #fff; border: 1px solid #8b8f91; vertical-align: middle; }
.box.dis { border-color: #e3e3e3; }
.box.yes::after { content: ""; position: absolute; left: 3px; top: 0; width: 4px; height: 8px; border: solid #333; border-width: 0 1.500px 1.500px 0; transform: rotate(40deg); }
.box.yes.dis::after { border-color: #ddd; }
.params .ac { padding-left: 4px; }
.locks { display: inline-block; position: relative; width: 19px; height: 22px; vertical-align: middle; }
.l1 { position: absolute; left: 0; top: 2px; }
.l2 { position: absolute; left: 7px; top: 8px; }
.full { color: #111; font-weight: 500; vertical-align: middle; }
.l0 { margin: 0 3px 0 2px; vertical-align: middle; }
.lk { color: #888; vertical-align: middle; }
.params .src { padding-left: 3px; color: #8a8a8a; }
.params td.sb { padding: 0; vertical-align: top; background: #f1f2f3; border-right: 0; border-bottom: 1px solid #b5b8ba; }
.sb-in { display: flex; flex-direction: column; height: 259px; }
.sb-up { height: 16px; display: flex; align-items: center; justify-content: center; background: #f4f5f6; }
.sb-thumb { height: 185px; background: #f7f8f8; border: 1px solid #d5d7d8; }
.sb-rest { flex: 1; background: #e6e7e8; }
.hscroll { height: 12px; background: #f1f2f3; border-top: 1px solid #c7cacc; }
.hs-l { display: flex; align-items: center; justify-content: center; width: 15px; height: 11px; border-right: 1px solid #d5d7d8; }
.updown { display: flex; flex-direction: column; gap: 11px; margin-left: 7px; padding-top: 131px; flex: none; }

/* annotations and watermark on top of the shot */
.marks { position: absolute; left: 0; top: 0; pointer-events: none; }
.ring { fill: none; stroke: #d8141b; stroke-width: 4; filter: drop-shadow(2px 2px 2px rgba(0,0,0,.35)); }
.wm { position: absolute; left: 1303px; top: 828px; width: 153px; height: 60px; overflow: hidden; pointer-events: none; }
.wm-cn { display: block; padding-left: 12px; font-size: 29px; line-height: 38px; font-weight: 900; color: #b4e2cc; letter-spacing: .5px; white-space: nowrap; }
.wm-en { display: block; font-family: "Liberation Sans", sans-serif; font-size: 16px; line-height: 20px; color: #d0e6f1; white-space: nowrap; }
```
